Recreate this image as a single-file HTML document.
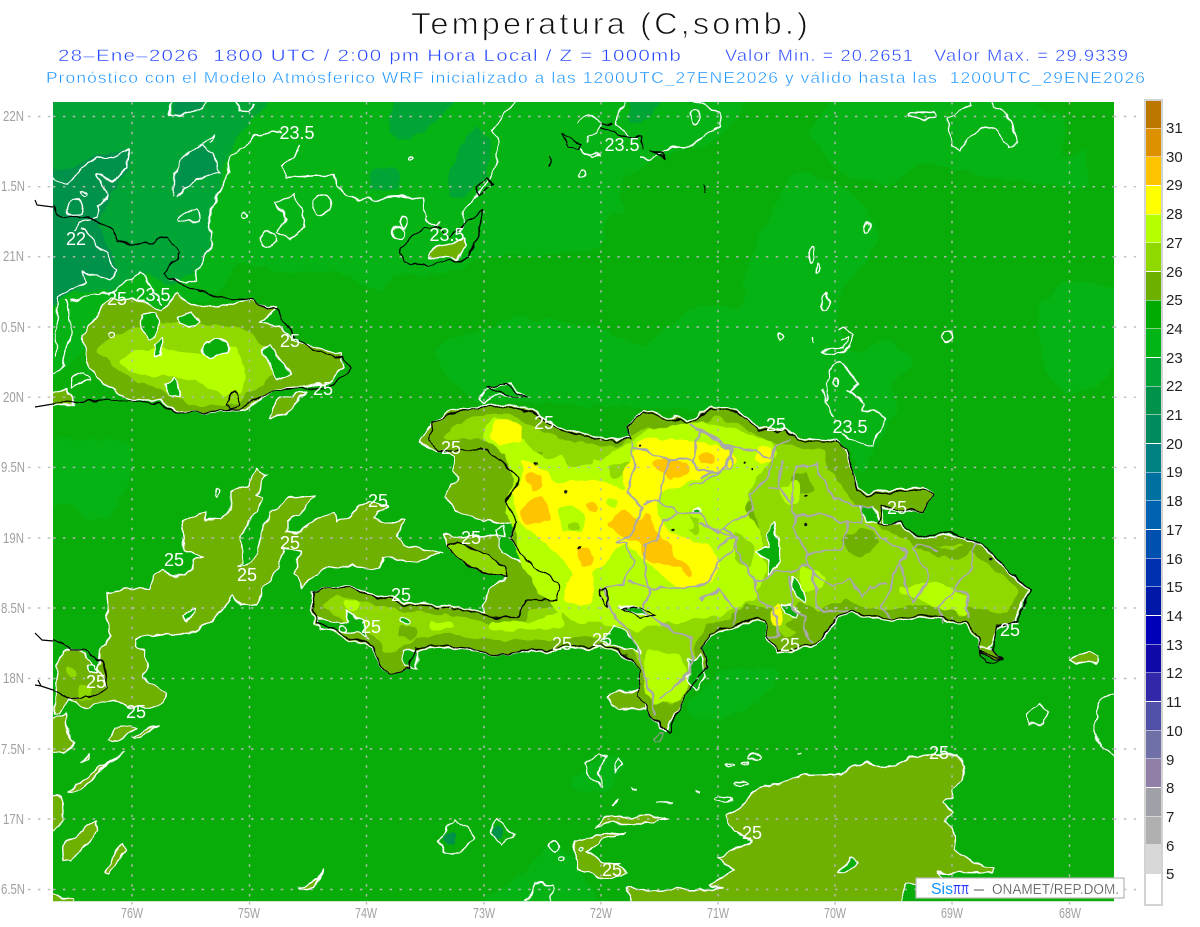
<!DOCTYPE html>
<html><head><meta charset="utf-8"><title>Temperatura</title>
<style>
html,body{margin:0;padding:0;background:#fff;width:1200px;height:927px;overflow:hidden}
svg{display:block}
text{font-family:"Liberation Sans",sans-serif}
.l{fill:#fff;font-size:18px;text-anchor:middle;stroke:none}
.ax{fill:#a0a0a0;font-size:15px;stroke:none}
.w{fill:none;stroke:#fff;stroke-width:1.4;stroke-linejoin:round}
.ol{fill:#6fb100;stroke:#fff;stroke-width:1.4;stroke-linejoin:round}
.bg{fill:#09ad09;stroke:#fff;stroke-width:1.4;stroke-linejoin:round}
.k{fill:none;stroke:#000;stroke-width:1.3;stroke-linejoin:round}
.g{fill:none;stroke:#a9a9a9;stroke-width:2;stroke-linejoin:round}
.cb{font-size:15px;fill:#222}
</style></head><body>
<svg width="1200" height="927" viewBox="0 0 1200 927" xmlns="http://www.w3.org/2000/svg">
<defs>
<filter id="wob" filterUnits="userSpaceOnUse" x="0" y="0" width="1200" height="927" color-interpolation-filters="sRGB">
<feTurbulence type="fractalNoise" baseFrequency=".07" numOctaves="2" seed="4"/>
<feDisplacementMap in="SourceGraphic" scale="9" xChannelSelector="R" yChannelSelector="G"/>
</filter>
<filter id="soft" filterUnits="userSpaceOnUse" x="0" y="0" width="1200" height="927" color-interpolation-filters="sRGB">
<feGaussianBlur stdDeviation="2.2"/>
<feComponentTransfer><feFuncA type="linear" slope="10" intercept="-4.5"/></feComponentTransfer>
</filter>
<filter id="soft2" filterUnits="userSpaceOnUse" x="0" y="0" width="1200" height="927" color-interpolation-filters="sRGB">
<feGaussianBlur stdDeviation="5"/>
<feComponentTransfer><feFuncA type="linear" slope="10" intercept="-4.5"/></feComponentTransfer>
</filter>
</defs>
<rect width="1200" height="927" fill="#fff"/>

<!-- titles -->
<text x="411" y="34" font-size="31" letter-spacing="3" textLength="400" lengthAdjust="spacingAndGlyphs" fill="#111" stroke="#fff" stroke-width=".85">Temperatura (C,somb.)</text>
<g fill="#2244ff" stroke="#fff" stroke-width=".45" font-size="17" letter-spacing="1">
<text x="58" y="61" textLength="624" lengthAdjust="spacingAndGlyphs" xml:space="preserve">28–Ene–2026  1800 UTC / 2:00 pm Hora Local / Z = 1000mb</text>
<text x="725" y="61" textLength="189" lengthAdjust="spacingAndGlyphs">Valor Min. = 20.2651</text>
<text x="934" y="61" textLength="195" lengthAdjust="spacingAndGlyphs">Valor Max. = 29.9339</text>
</g>
<text x="46" y="83" font-size="16" letter-spacing="1" fill="#0f8fff" stroke="#fff" stroke-width=".45" textLength="1100" lengthAdjust="spacingAndGlyphs" xml:space="preserve">Pronóstico con el Modelo Atmósferico WRF inicializado a las 1200UTC_27ENE2026 y válido hasta las  1200UTC_29ENE2026</text>

<!-- map -->
<svg x="53" y="102" width="1061" height="799" viewBox="53 102 1061 799" overflow="hidden">
<rect x="53" y="102" width="1061" height="799" fill="#09ad09"/>
<g filter="url(#wob)">
<!-- sea tones -->
<g fill="#05b314" filter="url(#soft2)">
<path d="M35,85H756L733,123 713,143 685,150 651,160 623,180 618,197 632,215 610,212 600,250 575,253 480,257 450,273 394,273 380,293 340,272 280,272 240,262 213,300 160,305 100,330 35,400Z"/>
<path d="M432,347L518,317 599,327 642,348 675,320 694,307 742,307 747,300 742,280 761,233 794,170 837,183 865,205 880,240 856,273 837,297 837,327 856,357 885,337 918,363 880,393 880,440 840,445 700,410 470,400 445,375Z"/>
<path d="M809,133L837,85H1037L1037,110 1066,113 1061,167 1085,143 1090,187 1130,200V85H1130V210L1090,190 994,177 918,163 892,187 837,173Z"/>
<path d="M1037,307L1066,280 1130,290V333L1104,383 1066,397 1042,367Z"/>
<path d="M812,390L815,410 840,433 857,463 860,487 870,457 897,410 897,390Z"/>
<path d="M35,440H131V480L108,520 85,520 72,505 35,510Z"/>
<path d="M722,670L784,667 764,700 718,720 692,720 684,707Z"/>
<path d="M565,787L600,757 630,757 607,793Z"/>
<path d="M458,915L516,880 554,840 573,857 604,915Z"/>
</g>
<g fill="#00a535" filter="url(#soft2)">
<path d="M35,85H287L250,122 228,155 215,200 210,213 212,247 197,270 170,287 140,272 117,290 57,293 35,303Z"/>
<path d="M387,133L409,143 442,117 461,90H394Z"/>
<path d="M444,193L461,200 485,177 492,147 478,123 461,143Z"/>
<path d="M628,90L630,127 647,120 670,90Z"/>
<path d="M370,168L400,168 400,190 370,193Z"/>
</g>
<g fill="#00924a" filter="url(#soft)">
<path d="M35,170L70,170 95,155 130,148 130,170 113,188 110,195 98,225 110,250 120,270 110,280 87,272 85,285 60,300 35,320Z"/>
<path d="M173,197L173,173 187,152 203,143 213,153 220,173 197,177 177,198Z"/>
<path d="M178,90L172,115 200,110 207,90Z"/>
<ellipse cx="450" cy="838" rx="7" ry="6"/>
<ellipse cx="498" cy="832" rx="6" ry="6"/>
</g>

<!-- Cuba 25 -->
<path class="ol" d="M82,337L110,298 140,300 163,310 177,293 190,305 220,307 247,300 277,308 260,323 280,327 300,343 340,353 343,367 333,383 300,387 270,390 247,410 213,412 180,412 160,400 130,400 103,382 90,367Z"/>
<path fill="#90d900" filter="url(#soft)" d="M95,350L115,335 150,325 180,322 215,325 250,330 265,350 275,375 255,390 235,405 190,405 160,390 125,375Z"/>
<path fill="#b4ff00" filter="url(#soft)" d="M120,360L135,350 175,350 205,355 235,345 245,365 243,395 225,395 195,380 160,375 130,372Z"/>
<path class="bg" d="M203,352C205,340 217,335 225,340 232,346 228,355 220,357 210,358 204,357 203,352Z"/>
<path class="bg" d="M141,315L155,312 160,322 156,335 148,338 141,328Z"/>
<path class="bg" d="M155,345L165,337 163,347 160,357 155,356Z"/>
<path class="bg" d="M178,318L190,312 200,322 192,326 180,325Z"/>
<path class="bg" d="M165,385L173,378 182,390 180,398 170,394Z"/>
<path class="bg" d="M262,350L270,345 290,375 278,380 270,365Z"/>
<path class="ol" d="M270,418L280,398 305,392 285,415Z"/>
<path class="ol" d="M47,397L68,388 75,405 47,405Z"/>
<path class="bg" d="M71,380L82,373 88,380 72,388Z"/>
<ellipse class="w" cx="110" cy="335" rx="3" ry="3"/>

<!-- sea olive -->
<path class="ol" d="M257,468L267,475 257,493 263,498 253,517 240,537 243,563 237,567 253,563 270,512 287,499 314,495 300,515 287,522 287,532 300,532 310,522 335,513 337,524 368,502 388,507 373,518 388,523 404,520 397,537 407,545 442,554 408,562 383,557 380,567 367,570 350,564 327,567 302,587 295,573 300,553 282,547 280,567 262,590 257,607 240,603 233,595 223,610 210,622 187,636 167,633 137,638 135,647 143,650 148,663 143,677 165,693 163,702 150,708 128,708 113,700 83,707 70,700 98,670 100,650 110,637 107,593 117,590 150,588 155,575 163,569 173,577 190,572 193,562 202,557 185,549 182,522 203,512 205,521 223,519 230,510 230,493 247,485Z"/>
<path class="ol" d="M61,650L80,650 98,670 107,688 90,697 70,698 60,713 55,715 55,690Z"/>
<path fill="#90d900" filter="url(#soft)" d="M66,666L77,670 74,678 66,676ZM76,685L93,686 95,699 78,700Z"/>
<path class="bg" d="M86,665L95,664 98,672 92,673Z"/>
<path class="ol" d="M47,723L67,713 69,733 73,743 63,752 47,750Z"/>
<path class="ol" d="M106,740L116,728 130,725 135,728 112,742Z"/>
<path class="ol" d="M133,738L150,728 158,726 145,735 135,739Z"/>
<path class="ol" d="M80,764L90,754 88,760Z"/>
<path class="ol" d="M68,792L100,767 125,752 103,767 82,789Z"/>
<path class="ol" d="M47,798L63,797 62,820 47,840Z"/>
<path class="ol" d="M62,847L63,860 72,862 97,830 98,823 85,827Z"/>
<path class="ol" d="M103,870L123,844 124,852 108,872Z"/>
<path class="ol" d="M297,888L317,880 325,867 323,873 313,888Z"/>
<path class="ol" d="M47,890L63,897 75,898 75,910 47,910Z"/>
<path class="bg" d="M183,617L190,608 195,608 188,620Z"/>
<ellipse class="w" cx="218" cy="491" rx="2" ry="4"/>

<!-- south big -->
<path class="ol" d="M956,755L965,765 962,780 952,790 954,798 942,803 952,813 944,823 956,837 954,848 971,860 994,868 990,873 935,872 950,880 916,884 904,885 903,912H636L627,887 653,891 722,888 709,885 736,870 718,858 736,848 751,840 734,832 726,815 745,803 757,790 778,783 806,775 841,774 864,763 885,767 910,757 929,755Z"/>
<path class="bg" d="M839,873L849,858 857,862 843,873Z"/>
<path class="ol" d="M595,828L604,817 650,815 669,818 646,823 604,823Z"/>
<path class="ol" d="M625,833L588,837 574,842 576,860 580,870 604,880 627,875 625,868 600,860 588,852 600,842Z"/>
<circle class="bg" cx="582" cy="849" r="2"/>
<path class="ol" d="M607,698L619,692 640,688 644,710 638,710 619,708Z"/>

<!-- Inagua -->
<path class="ol" d="M428,258L437,247 463,240 466,248 456,259 442,257Z"/>

<!-- Hispaniola 25 -->
<path class="w" d="M480,398L490,387 510,384 527,397 500,394 482,404Z"/>
<path class="ol" d="M417,441L432,424 450,412 466,407 510,405 533,411 560,428 593,436 617,440 633,437 627,427 643,410 687,420 713,406 737,411 760,428 785,428 797,438 833,440 845,450 858,488 868,496 890,490 923,486 933,495 923,512 880,509 882,523 900,525 920,537 957,535 977,544 1028,590 1015,620 997,629 990,648 980,651 975,635 963,624 947,620 930,617 913,619 890,622 873,619 850,612 837,619 817,647 777,652 768,640 765,622 753,619 733,629 710,635 703,647 708,667 690,685 680,705 665,733 650,715 637,695 640,670 620,652 600,647 560,650 500,655 440,647 415,650 410,670 388,675 372,647 345,638 313,622 312,592 340,586 403,601 450,606 485,613 483,607 490,590 505,578 483,572 457,557 448,547 443,535 497,537 503,553 532,568 510,537 517,522 483,523 455,510 445,497 458,477 452,470 453,457 445,450 430,447Z"/>
<path class="ol" d="M993,648L1002,660 980,653 980,648Z"/>
<path fill="#90d900" d="M448,547L458,542 487,553 503,567 505,578 483,572 457,557Z"/>
<path fill="#90d900" filter="url(#soft)" d="M440,440L455,425 480,415 510,414 530,425 560,440 593,444 620,447 640,430 690,428 715,416 740,425 765,438 790,447 825,450 828,470 845,490 860,510 880,528 920,545 960,545 990,565 1020,590 1005,615 985,610 960,600 930,605 880,610 845,600 825,605 805,625 785,640 775,625 770,610 745,605 725,620 705,625 695,645 695,670 670,705 650,700 645,670 625,645 600,635 560,640 500,640 440,635 415,640 385,655 375,635 350,625 322,605 335,595 400,610 450,615 490,625 520,625 530,610 560,605 570,590 555,565 525,530 525,500 525,475 505,450 480,438 455,440Z"/>
<g fill="#6fb100" filter="url(#soft)">
<path d="M730,520L750,500 760,530 745,560 730,560ZM800,600L820,610 830,612 800,635 785,625ZM790,480L805,470 815,490 800,495ZM865,525L880,540 860,560 840,540ZM520,440L545,445 540,460 525,455ZM905,535L950,550 975,545 960,560 915,550ZM400,625L420,628 415,640 395,638Z"/>
</g>
<g fill="#b4ff00" filter="url(#soft)">
<path d="M483,430L495,418 515,425 530,445 545,458 575,455 600,462 625,445 650,430 700,420 730,428 770,440 780,455 760,470 750,490 745,510 760,530 765,570 755,600 720,615 690,620 660,625 640,630 610,625 570,620 540,595 520,560 515,530 505,510 515,480 500,450 485,440Z"/>
<path d="M897,587L940,582 957,590 970,600 967,617 947,610 913,597 900,593Z"/>
<path d="M490,620L530,622 560,612 562,628 520,630 490,630ZM645,650L665,650 680,655 690,680 680,700 655,705 645,690ZM345,600L360,600 355,610 345,610ZM430,622L455,622 455,630 430,630ZM780,490L800,480 800,500 785,505ZM800,565L825,575 820,590 800,590Z"/>
</g>
<g fill="#90d900" filter="url(#soft)">
<path d="M555,440L590,450 595,465 565,465ZM680,512L700,518 698,535 684,528ZM735,530L755,545 750,570 735,560ZM607,467L630,458 625,472 610,478ZM523,437L545,442 545,452 530,450Z"/>
</g>
<g fill="#ffff00" filter="url(#soft)">
<path d="M497,420L523,425 523,440 500,445 490,440Z"/>
<path d="M513,493L523,473 520,460 540,467 557,483 590,480 620,487 627,493 623,467 637,450 637,440 687,440 727,447 737,463 713,473 687,483 660,493 657,510 670,533 710,547 723,563 710,583 680,590 657,570 640,557 627,543 613,553 607,563 597,570 593,575 593,605 563,603 567,583 573,573 557,553 523,527 517,517Z"/>
<path d="M757,445L775,450 770,465 755,460ZM770,610L782,605 782,630 772,625Z"/>
</g>
<g fill="#b4ff00" filter="url(#soft)">
<path d="M557,507L572,505 585,515 583,533 562,532ZM664,512L690,515 694,530 672,530ZM610,555L625,548 622,560 612,566ZM607,498L620,500 617,510 606,508Z"/>
</g>
<path fill="#90d900" filter="url(#soft)" d="M566,522L577,520 581,530 570,532Z"/>
<g fill="#ffc400" filter="url(#soft)">
<path d="M525,473L540,473 543,487 533,493Z"/>
<path d="M520,513L530,500 543,497 553,520 537,523 523,525Z"/>
<path d="M583,503L593,500 600,510 593,513Z"/>
<path d="M605,523L623,508 640,520 645,515 647,513 657,533 670,543 673,557 693,570 697,578 667,563 653,563 643,557 640,543 625,538Z"/>
<path d="M578,548L592,548 593,567 582,568Z"/>
<path d="M650,462L667,458 690,463 690,473 670,480 663,473Z"/>
<path d="M697,455L713,453 717,465 700,465Z"/>
</g>

<!-- holes in Hispaniola -->
<path class="bg" d="M772,522L780,547 777,567 767,575 767,560 755,553 768,548 768,533Z"/>
<path class="bg" d="M793,577L805,590 805,600 798,598 792,590Z"/>
<path class="bg" d="M783,607L790,605 800,612 795,616 785,613Z"/>
<path class="bg" d="M315,618L325,620 340,624 350,620 345,610 357,617 363,620 363,630 370,640 355,632 340,632 320,628Z"/>
<path class="bg" d="M403,650H417L417,668 405,668Z"/>
<ellipse class="w" cx="405" cy="620" rx="4" ry="3" style="fill:#09ad09"/>
<ellipse class="w" cx="343" cy="629" rx="5" ry="3"/>
<path class="bg" d="M620,605L640,606 648,615 630,612Z"/>
<path class="bg" d="M600,640L615,625 635,640 640,655 620,648Z"/>
<path class="bg" d="M688,660L702,655 705,678 695,690 688,680Z"/>
<path class="bg" d="M860,507L873,507 880,525 868,520Z"/>
<path class="bg" d="M497,530L503,525 505,537 498,537Z"/>
<ellipse class="w" cx="697" cy="511" rx="4" ry="2" style="fill:#09ad09"/>

<!-- contours (white) -->
<g class="w">
<path d="M172,102L170,116 200,110 207,102"/>
<path d="M235,102L240,110 247,113 256,102"/>
<path d="M280,131L257,135 230,158 228,173 217,193 210,217 212,243 197,270 198,280 187,283 170,278"/>
<path d="M300,145L293,157 282,167 287,178 303,177 333,175 347,197 360,200 401,197 423,200 425,217 435,227 440,222"/>
<path d="M173,197L173,173 187,152 203,143 213,153 220,173 197,177 177,198M203,142L213,135 210,143"/>
<path d="M178,220C175,212 195,212 198,210 205,225 192,222 178,220Z"/>
<path d="M47,175L67,183 97,157 113,158 130,148 127,167 113,183 97,173 100,183 108,193 98,207 97,217 80,222 75,230"/>
<circle cx="75" cy="208" r="8"/>
<ellipse cx="83" cy="193" rx="4" ry="2"/>
<path d="M83,227L97,247 107,253 117,270 110,280 83,272 87,283 58,297 55,357"/>
<path d="M66,300L72,332 63,367 47,380"/>
<path d="M70,300L117,290 140,272 150,287 163,305"/>
<path d="M275,203L293,195 303,213 305,227 290,240 277,233 287,217Z"/>
<ellipse cx="322" cy="204" rx="9" ry="10"/>
<ellipse cx="268" cy="240" rx="8" ry="7"/>
<ellipse cx="245" cy="215" rx="3.5" ry="3"/>
<path d="M518,100L492,130 499,143 493,172 485,185 478,195 463,212 463,225 458,232"/>
<ellipse cx="404" cy="222" rx="3" ry="7"/>
<ellipse cx="398" cy="233" rx="5" ry="6"/>
<ellipse cx="410" cy="158" rx="3" ry="1.5"/>
<path d="M578,123L590,113 601,123 597,133 585,137 587,143"/>
<path d="M582,148L590,159 601,155 588,155Z"/>
<circle cx="582" cy="173" r="3.5"/>
<path d="M623,100L616,125 630,137M640,157L651,158 670,147 690,148 709,133 720,125 720,113 694,100"/>
<ellipse cx="695" cy="117" rx="5" ry="7"/>
<ellipse cx="923" cy="115" rx="14" ry="3"/>
<path d="M947,117L951,147 961,153 970,137 985,127 999,132 1009,147 1018,143 1009,113 992,107 992,100M947,117L971,107 971,100"/>
<ellipse cx="868" cy="228" rx="2.5" ry="4"/>
<ellipse cx="811" cy="255" rx="3" ry="7"/>
<ellipse cx="817" cy="268" rx="1.5" ry="4"/>
<ellipse cx="825" cy="303" rx="3.5" ry="9"/>
<ellipse cx="780" cy="337" rx="3" ry="3"/>
<path d="M813,337V343"/>
<path d="M837,330L844,327 854,335 849,348 835,356 823,351 844,348 849,337 840,340"/>
<ellipse cx="947" cy="337" rx="4" ry="5"/>
<path d="M828,402L826,385 830,370 842,363 858,383 851,393 861,400"/>
<ellipse cx="836" cy="381" rx="2" ry="4"/>
<path d="M822,390L833,417M848,390L863,403 863,413 873,410 887,418 877,433 873,448 840,433"/>
<path d="M439,840L454,818 472,832 472,840 458,852 445,852Z"/>
<path d="M490,832L498,818 514,835 502,845Z"/>
<ellipse cx="555" cy="847" rx="4.5" ry="5.5"/>
<ellipse cx="563" cy="860" rx="4" ry="2.5"/>
<path d="M523,910L535,883 552,885 552,910"/>
<path d="M585,765L598,753 607,757 598,773 603,786 590,780Z"/>
<path d="M613,765L618,758 622,765 616,772Z"/>
<ellipse cx="730" cy="765" rx="4" ry="1.2"/>
<ellipse cx="745" cy="761" rx="4" ry="1.2"/>
<ellipse cx="755" cy="757" rx="6" ry="2"/>
<ellipse cx="741" cy="784" rx="7" ry="2"/>
<ellipse cx="723" cy="799" rx="8" ry="2.5"/>
<path d="M694,792H700M798,753H803M630,788H636M613,804L618,800 616,803ZM657,803H673"/>
<path d="M1120,693L1100,700 1094,725 1100,745 1120,760"/>
<path d="M1025,715L1040,703 1047,710 1043,725 1028,725Z"/>
</g>
<path class="ol" d="M1068,660L1090,651 1098,655 1095,663 1075,665Z"/>

<!-- provincial borders -->
<g class="g">
<path d="M633,440L632,453 635,470 627,493 643,507 633,530 617,543 627,543 633,563 623,583 603,590 613,613 633,637 640,660 650,690 655,715"/>
<path d="M633,448L647,450 660,457 667,460 693,458 700,430 690,423"/>
<path d="M667,460L663,483 660,500 643,503"/>
<path d="M693,458L697,470 720,473 733,450 697,430"/>
<path d="M660,500L680,513 700,513 710,527 720,533 737,537 733,550 720,560 717,567 707,583 683,590 650,587 627,583"/>
<path d="M647,543L643,563 650,587 643,610 655,620 690,640 693,655 685,680 660,700"/>
<path d="M677,513L663,520 657,540 643,547"/>
<path d="M690,487L720,473"/>
<path d="M700,430L730,447 753,450 770,460 777,445 790,440"/>
<path d="M730,447L730,467 700,477"/>
<path d="M777,447L773,460 767,477 750,497 753,510 723,527 717,533 700,523"/>
<path d="M767,487L780,490"/>
<path d="M783,460L780,487 790,503 797,467 817,463 827,487 833,497 860,507 873,507"/>
<path d="M790,503L797,515 793,527 807,553 807,563 790,573 777,570 763,580 755,580 758,597 777,617 780,637 768,638"/>
<path d="M797,515L827,515 840,523 847,522 843,547 833,550 807,555"/>
<path d="M847,523L863,523 863,507"/>
<path d="M867,523L880,537 907,553 897,567 890,590 882,607 892,620"/>
<path d="M900,563L903,577 913,603 927,583 927,570 913,550 917,545 937,550"/>
<path d="M977,543L972,553 975,567 960,580 953,590 940,607 943,623"/>
<path d="M953,588L963,590 970,603 967,620"/>
<path d="M807,563L817,577 820,580 833,585 850,578 863,597 870,587 887,583"/>
<path d="M813,570L817,603 830,612 847,610"/>
<path d="M790,577L792,607 803,617 807,637 813,643"/>
<path d="M737,537L737,553 747,567 755,580"/>
<path d="M717,547L733,537M723,527L737,537"/>
<path d="M700,600L720,590 735,610 733,625"/>
</g>

<!-- coast -->
<g class="k">
<path d="M487,387L505,384 527,397 510,395Z"/>
<path d="M430,440L433,423 467,408 510,407 533,413 560,430 593,438 617,442 633,438 627,427 643,412 687,422 713,408 737,413 760,430 785,430 797,440 833,442 847,450 857,490 867,498 890,492 923,488 933,495 923,512 880,507 878,525 900,523 920,535 957,533 977,542 1030,590 1017,620 997,627 993,648 1002,660 980,653 977,633 963,622 947,618 930,615 913,617 890,620 873,617 850,610 837,617 817,645 777,650 768,638 765,620 753,617 733,627 710,633 703,647 708,667 690,685 680,705 669,735 650,715 637,695 640,670 620,650 600,645 560,648 500,655 440,645 415,648 410,670 388,675 372,645 345,636 315,620 313,592 340,587 403,603 450,608 497,617 517,617 527,600 557,600 560,583 533,567 510,537 517,522 507,503 513,493 518,477 500,460 480,448 463,450 443,450Z"/>
<path d="M448,547L458,542 487,553 503,567 505,578 483,572 457,557Z"/>
<path d="M598,590L603,600 608,607 605,590ZM622,607L640,606 655,615 640,618Z"/>
<path d="M980,652L995,655 1002,660 985,662Z"/>
<path d="M35,407L57,403 100,400 160,403 180,413 240,410 270,390 335,387 350,368 343,357 313,350 300,340 280,320 277,310 250,300 213,297 190,290 180,283 163,273 180,253 167,238 147,243 118,243 113,230 87,217 70,217 57,215 53,207 37,205"/>
<path d="M225,405L235,392 240,405 232,410Z"/>
<path d="M401,253L405,243 425,228 440,228 449,237 478,213 482,210 482,227 468,258 428,266 404,263Z"/>
<path d="M477,187L485,178 493,185 479,195Z"/>
<path d="M563,135L582,143 580,149 567,148Z"/>
<path d="M600,128L609,128 616,136 640,137 644,150M599,123L613,123"/>
<path d="M651,150L666,159 661,153Z"/>
<path d="M549,158V165M705,185V192"/>
<path d="M35,633L42,640 55,640 70,650 85,650 100,660 103,668 107,688 90,697 70,698 55,690 35,683"/>
</g>
<path fill="none" stroke="#999" stroke-width="1.2" d="M654,738L660,733 663,735 660,741 655,742Z"/>
<g fill="#111"><circle cx="567" cy="492" r="1.4"/><circle cx="580" cy="547" r="2"/><circle cx="640" cy="445" r="1.2"/><circle cx="805" cy="524" r="1.8"/><circle cx="990" cy="560" r="1.4"/><circle cx="745" cy="462" r="1.4"/><circle cx="752" cy="470" r="1.2"/><circle cx="805" cy="496" r="1.2"/><circle cx="537" cy="465" r="1.4"/><circle cx="672" cy="530" r="1.2"/></g>
</g>

<!-- grid -->
<g stroke="#b8b8b8" stroke-width="1.4" fill="none" stroke-dasharray="2.5 7.4">
<path d="M53,116.500H1114M53,186.700H1114M53,256.800H1114M53,327H1114M53,397.200H1114M53,467.400H1114M53,538H1114M53,608H1114M53,678.500H1114M53,749H1114M53,819H1114M53,889.500H1114"/>
<path d="M132,102V901M249.500,102V901M366.500,102V901M484,102V901M601,102V901M718,102V901M835,102V901M952,102V901M1069.500,102V901"/>
</g>

<!-- labels -->
<g class="l">
<text class="l" x="297" y="139">23.5</text><text class="l" x="622" y="151">23.5</text><text class="l" x="447" y="241">23.5</text>
<text class="l" x="76" y="245">22</text><text class="l" x="117" y="305">25</text><text class="l" x="153" y="301">23.5</text>
<text class="l" x="290" y="347">25</text><text class="l" x="323" y="395">25</text><text class="l" x="544" y="429">25</text>
<text class="l" x="451" y="454">25</text><text class="l" x="776" y="431">25</text><text class="l" x="850" y="433">23.5</text>
<text class="l" x="378" y="507">25</text><text class="l" x="897" y="514">25</text><text class="l" x="471" y="544">25</text>
<text class="l" x="290" y="549">25</text><text class="l" x="174" y="566">25</text><text class="l" x="247" y="581">25</text>
<text class="l" x="401" y="601">25</text><text class="l" x="371" y="633">25</text><text class="l" x="562" y="650">25</text>
<text class="l" x="602" y="646">25</text><text class="l" x="790" y="651">25</text><text class="l" x="1010" y="636">25</text>
<text class="l" x="96" y="688">25</text><text class="l" x="136" y="718">25</text><text class="l" x="939" y="759">25</text>
<text class="l" x="752" y="839">25</text><text class="l" x="612" y="876">25</text>
</g>
</svg>
<rect x="53" y="901" width="1061" height="1" fill="#cfe9cf"/>

<!-- coast stubs outside the map -->
<g fill="none" stroke="#000" stroke-width="1.2">
<path d="M35,200L37,205 45,206 53,207"/>
<path d="M35,407L53,404"/>
<path d="M35,633L42,640 53,641"/>
<path d="M35,685L41,686 38,680M41,686L53,690"/>
</g>

<!-- outer ticks -->
<g stroke="#bdbdbd" stroke-width="1.4" fill="none" stroke-dasharray="2.5 7.4">
<path d="M28,116.500H53M28,186.700H53M28,256.800H53M28,327H53M28,397.200H53M28,467.400H53M28,538H53M28,608H53M28,678.500H53M28,749H53M28,819H53M28,889.500H53"/>
<path d="M1114,116.500H1136M1114,186.700H1136M1114,256.800H1136M1114,327H1136M1114,397.200H1136M1114,467.400H1136M1114,538H1136M1114,608H1136M1114,678.500H1136M1114,749H1136M1114,819H1136M1114,889.500H1136"/>
<path d="M132,902V906M249.500,902V906M366.500,902V906M484,902V906M601,902V906M718,902V906M835,902V906M952,902V906M1069.500,902V906"/>
</g>

<!-- axis labels -->
<g class="ax">
<text x="3" y="121" textLength="21" lengthAdjust="spacingAndGlyphs">22N</text>
<text x="1" y="191" textLength="24" lengthAdjust="spacingAndGlyphs">1.5N</text>
<text x="3" y="261" textLength="21" lengthAdjust="spacingAndGlyphs">21N</text>
<text x="1" y="332" textLength="24" lengthAdjust="spacingAndGlyphs">0.5N</text>
<text x="3" y="402" textLength="21" lengthAdjust="spacingAndGlyphs">20N</text>
<text x="1" y="472" textLength="24" lengthAdjust="spacingAndGlyphs">9.5N</text>
<text x="3" y="543" textLength="21" lengthAdjust="spacingAndGlyphs">19N</text>
<text x="1" y="613" textLength="24" lengthAdjust="spacingAndGlyphs">8.5N</text>
<text x="3" y="683" textLength="21" lengthAdjust="spacingAndGlyphs">18N</text>
<text x="1" y="754" textLength="24" lengthAdjust="spacingAndGlyphs">7.5N</text>
<text x="3" y="824" textLength="21" lengthAdjust="spacingAndGlyphs">17N</text>
<text x="1" y="894" textLength="24" lengthAdjust="spacingAndGlyphs">6.5N</text>
<text x="121" y="918" textLength="22" lengthAdjust="spacingAndGlyphs">76W</text>
<text x="238" y="918" textLength="22" lengthAdjust="spacingAndGlyphs">75W</text>
<text x="355" y="918" textLength="22" lengthAdjust="spacingAndGlyphs">74W</text>
<text x="473" y="918" textLength="22" lengthAdjust="spacingAndGlyphs">73W</text>
<text x="590" y="918" textLength="22" lengthAdjust="spacingAndGlyphs">72W</text>
<text x="707" y="918" textLength="22" lengthAdjust="spacingAndGlyphs">71W</text>
<text x="824" y="918" textLength="22" lengthAdjust="spacingAndGlyphs">70W</text>
<text x="941" y="918" textLength="22" lengthAdjust="spacingAndGlyphs">69W</text>
<text x="1059" y="918" textLength="22" lengthAdjust="spacingAndGlyphs">68W</text>
</g>

<!-- logo box -->
<rect x="916" y="878" width="208" height="20" fill="#fff" stroke="#b8b8b8" stroke-width="1.2"/>
<text x="931" y="894" font-size="15.500" fill="#1090ff" textLength="22" lengthAdjust="spacingAndGlyphs">Sis</text>
<text x="953" y="894" font-size="17" font-family="Liberation Serif" fill="#2233ff" textLength="16" lengthAdjust="spacingAndGlyphs">ππ</text>
<text x="974" y="894" font-size="15" fill="#555" textLength="10" lengthAdjust="spacingAndGlyphs">–</text>
<text x="992" y="894" font-size="15" fill="#555" stroke="#fff" stroke-width=".25" textLength="127" lengthAdjust="spacingAndGlyphs">ONAMET/REP.DOM.</text>

<!-- colour bar -->
<rect x="1145" y="100" width="17" height="805" fill="#fff" stroke="#d2d2d2" stroke-width="2"/>
<g>
<rect x="1146" y="101" width="15" height="27" fill="#bb7700"/>
<rect x="1146" y="128.500" width="15" height="28" fill="#dd9000"/>
<rect x="1146" y="157" width="15" height="28" fill="#ffc400"/>
<rect x="1146" y="186" width="15" height="28" fill="#ffff00"/>
<rect x="1146" y="214.500" width="15" height="28" fill="#b4ff00"/>
<rect x="1146" y="243" width="15" height="28" fill="#90d900"/>
<rect x="1146" y="272" width="15" height="28" fill="#6eb000"/>
<rect x="1146" y="300.500" width="15" height="28" fill="#00aa00"/>
<rect x="1146" y="329" width="15" height="28" fill="#00b515"/>
<rect x="1146" y="358" width="15" height="28" fill="#00a535"/>
<rect x="1146" y="386.500" width="15" height="28" fill="#00924a"/>
<rect x="1146" y="415" width="15" height="28" fill="#008a60"/>
<rect x="1146" y="444" width="15" height="28" fill="#008080"/>
<rect x="1146" y="472.500" width="15" height="28" fill="#0070a0"/>
<rect x="1146" y="501" width="15" height="28" fill="#0062b0"/>
<rect x="1146" y="530" width="15" height="28" fill="#0050b0"/>
<rect x="1146" y="558.500" width="15" height="28" fill="#0030b0"/>
<rect x="1146" y="587" width="15" height="28" fill="#0018a8"/>
<rect x="1146" y="616" width="15" height="28" fill="#0000b8"/>
<rect x="1146" y="644.500" width="15" height="28" fill="#1008a8"/>
<rect x="1146" y="673" width="15" height="28" fill="#3028a8"/>
<rect x="1146" y="702" width="15" height="28" fill="#5050a8"/>
<rect x="1146" y="730.500" width="15" height="28" fill="#7070a8"/>
<rect x="1146" y="759" width="15" height="28" fill="#9080a8"/>
<rect x="1146" y="788" width="15" height="28" fill="#a0a0a8"/>
<rect x="1146" y="816.500" width="15" height="28" fill="#b0b0b0"/>
<rect x="1146" y="845" width="15" height="29" fill="#d8d8d8"/>
<rect x="1146" y="874" width="15" height="29" fill="#ffffff"/>
</g>
<g class="cb">
<text class="cb" x="1166" y="133">31</text><text class="cb" x="1166" y="162">30</text><text class="cb" x="1166" y="190">29</text>
<text class="cb" x="1166" y="219">28</text><text class="cb" x="1166" y="248">27</text><text class="cb" x="1166" y="277">26</text>
<text class="cb" x="1166" y="305">25</text><text class="cb" x="1166" y="334">24</text><text class="cb" x="1166" y="363">23</text>
<text class="cb" x="1166" y="391">22</text><text class="cb" x="1166" y="420">21</text><text class="cb" x="1166" y="449">20</text>
<text class="cb" x="1166" y="477">19</text><text class="cb" x="1166" y="506">18</text><text class="cb" x="1166" y="535">17</text>
<text class="cb" x="1166" y="564">16</text><text class="cb" x="1166" y="592">15</text><text class="cb" x="1166" y="621">14</text>
<text class="cb" x="1166" y="650">13</text><text class="cb" x="1166" y="678">12</text><text class="cb" x="1166" y="707">11</text>
<text class="cb" x="1166" y="736">10</text><text class="cb" x="1166" y="765">9</text><text class="cb" x="1166" y="793">8</text>
<text class="cb" x="1166" y="822">7</text><text class="cb" x="1166" y="851">6</text><text class="cb" x="1166" y="879">5</text>
</g>
</svg>
</body></html>
